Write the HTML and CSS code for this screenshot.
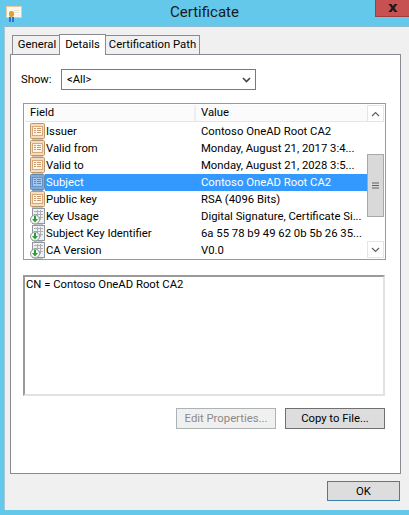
FILE: index.html
```html
<!DOCTYPE html>
<html lang="en">
<head>
    <meta charset="UTF-8">
    <title>Certificate</title>
    <link rel="stylesheet" href="styles.css">
</head>
<body>

    <svg class="defs" width="0" height="0">
        <defs>
            <symbol id="fieldIcon" viewBox="0 0 15 17">
                <rect x="0.5" y="0.5" width="14" height="15" rx="1" fill="#f3dcc0" stroke="#b8966e"/>
                <rect x="2.5" y="3.500" width="10" height="9" fill="#fdf6ea" stroke="#d9a878"/>
                <path d="M4 5.500h2M7 5.500h4M4 7.500h2M7 7.500h4M4 9.500h2M7 9.500h4" stroke="#d09868"/>
                <path d="M2 16.500h11" stroke="#d8c4ac"/>
            </symbol>
            <symbol id="fieldIconSelected" viewBox="0 0 15 17">
                <rect x="0.5" y="0.5" width="14" height="15" rx="1" fill="#84abd6" stroke="#6288ae"/>
                <rect x="2.5" y="3.500" width="10" height="9" fill="#a6c6ec" stroke="#5f94d0"/>
                <path d="M4 5.500h2M7 5.500h4M4 7.500h2M7 7.500h4M4 9.500h2M7 9.500h4" stroke="#4f88cc"/>
                <path d="M2 16.500h11" stroke="#86a4c4"/>
            </symbol>
            <symbol id="extIcon" viewBox="0 0 15 17">
                <rect x="2.500" y="0.5" width="12" height="15" fill="#eef0f2" stroke="#92979e"/>
                <path d="M4 3.500h9M4 6.500h9M4 9.500h9M7.500 2v10M10.500 2v10" stroke="#aab0b8"/>
                <path d="M4 16.500h9" stroke="#c4c8cc"/>
                <circle cx="5" cy="11.500" r="4.500" fill="#f4f8f2" stroke="#86948a"/>
                <path d="M4 8h2v3h2l-3 3.500-3-3.500h2z" fill="#2a9e38"/>
            </symbol>
        </defs>
    </svg>

    <div class="window">
        <div class="titlebar">
            <svg class="appIcon" width="16" height="17" viewBox="0 0 16 17">
                <rect x="0.5" y="0.5" width="15" height="11" fill="#fdf8ee" stroke="#e0cda8"/>
                <path d="M8 4.500h5M8 6.500h5" stroke="#efe4d0"/>
                <rect x="3" y="5" width="5" height="6" rx="2" fill="#e0a030"/>
                <path d="M3 11h2v5H3zM6 11h2v5H6z" fill="#2f72d8"/>
            </svg>
            <span class="titleText">Certificate</span>
            <div class="closeButton">
                <svg width="10" height="8" viewBox="0 0 10 8">
                    <path d="M0.500 0h3L5 2.200 6.500 0h3L6.500 4l3 4h-3L5 5.800 3.500 8h-3l3-4z" fill="#1c1c1c"/>
                </svg>
            </div>
        </div>

        <div class="client">
            <div class="tabs">
                <div class="tab tabGeneral">General</div>
                <div class="tab tabActive">Details</div>
                <div class="tab tabPath">Certification Path</div>
            </div>

            <div class="panel">
                <div class="showRow">
                    <span class="showLabel">Show:</span>
                    <div class="select">
                        <span>&lt;All&gt;</span>
                        <svg width="9" height="6" viewBox="0 0 9 6">
                            <path d="M1 1l3.500 3.500L8 1" fill="none" stroke="#444" stroke-width="1.600"/>
                        </svg>
                    </div>
                </div>

                <div class="list">
                    <div class="listMain">
                        <div class="listHead">
                            <div class="colField headCell">Field</div>
                            <div class="colValue headCell">Value</div>
                        </div>
                        <div class="row">
                            <div class="colField"><svg class="rowIcon"><use href="#fieldIcon"/></svg><span>Issuer</span></div>
                            <div class="colValue">Contoso OneAD Root CA2</div>
                        </div>
                        <div class="row">
                            <div class="colField"><svg class="rowIcon"><use href="#fieldIcon"/></svg><span>Valid from</span></div>
                            <div class="colValue">Monday, August 21, 2017 3:4...</div>
                        </div>
                        <div class="row">
                            <div class="colField"><svg class="rowIcon"><use href="#fieldIcon"/></svg><span>Valid to</span></div>
                            <div class="colValue">Monday, August 21, 2028 3:5...</div>
                        </div>
                        <div class="row rowSelected">
                            <div class="colField"><svg class="rowIcon"><use href="#fieldIconSelected"/></svg><span class="selText">Subject</span></div>
                            <div class="colValue selText">Contoso OneAD Root CA2</div>
                        </div>
                        <div class="row">
                            <div class="colField"><svg class="rowIcon"><use href="#fieldIcon"/></svg><span>Public key</span></div>
                            <div class="colValue">RSA (4096 Bits)</div>
                        </div>
                        <div class="row">
                            <div class="colField"><svg class="rowIcon"><use href="#extIcon"/></svg><span>Key Usage</span></div>
                            <div class="colValue">Digital Signature, Certificate Si...</div>
                        </div>
                        <div class="row">
                            <div class="colField"><svg class="rowIcon"><use href="#extIcon"/></svg><span>Subject Key Identifier</span></div>
                            <div class="colValue">6a 55 78 b9 49 62 0b 5b 26 35...</div>
                        </div>
                        <div class="row">
                            <div class="colField"><svg class="rowIcon"><use href="#extIcon"/></svg><span>CA Version</span></div>
                            <div class="colValue">V0.0</div>
                        </div>
                    </div>
                    <div class="scrollbar">
                        <div class="scrollBtn">
                            <svg width="9" height="6" viewBox="0 0 9 6"><path d="M1 5l3.500-3.500L8 5" fill="none" stroke="#606060" stroke-width="1.200"/></svg>
                        </div>
                        <div class="trackTop"></div>
                        <div class="thumb">
                            <svg width="7" height="7" viewBox="0 0 7 7"><path d="M0 1h7M0 3.500h7M0 6h7" stroke="#606060"/></svg>
                        </div>
                        <div class="track"></div>
                        <div class="scrollBtn">
                            <svg width="9" height="6" viewBox="0 0 9 6"><path d="M1 1l3.500 3.500L8 1" fill="none" stroke="#606060" stroke-width="1.200"/></svg>
                        </div>
                    </div>
                </div>

                <div class="detailBox">CN = Contoso OneAD Root CA2</div>

                <div class="panelButtons">
                    <button class="btn btnDisabled">Edit Properties...</button>
                    <button class="btn">Copy to File...</button>
                </div>
            </div>

            <div class="footer">
                <button class="btn btnOk">OK</button>
            </div>
        </div>
    </div>

</body>
</html>
```

FILE: styles.css
```css
html, body {
    margin: 0;
    padding: 0;
}

body {
    width: 409px;
    height: 515px;
    overflow: hidden;
    background-color: #63c8ea;
    font-family: Roboto, Arial, sans-serif;
    font-size: 11.3px;
    color: #000;
}

.defs {
    position: absolute;
}

.window {
    display: flex;
    flex-direction: column;
    height: 510px;
}

.titlebar {
    display: flex;
    align-items: flex-start;
    height: 26px;
    padding-left: 6px;
    flex: none;
}

.appIcon {
    margin-top: 6px;
    flex: none;
}

.titleText {
    flex: 1;
    text-align: center;
    font-size: 15px;
    line-height: 24px;
    color: #1a1a1a;
    padding-left: 12px;
}

.closeButton {
    box-sizing: border-box;
    display: flex;
    align-items: center;
    justify-content: center;
    width: 34px;
    height: 17px;
    background-color: #c75050;
    border: 1px solid #a03c3c;
    border-top: none;
    border-right: none;
    flex: none;
}

.client {
    flex: 1;
    margin-left: 4px;
    padding: 7px 0 0 5px;
    background-color: #f0f0f0;
    border-top: 1px solid #8fb8cc;
    border-left: 1px solid #a8c8d8;
    box-sizing: border-box;
    display: flex;
    flex-direction: column;
}

.tabs {
    display: flex;
    align-items: flex-end;
    height: 21px;
    margin-bottom: -1px;
    padding-left: 2px;
    position: relative;
    z-index: 1;
    flex: none;
}

.tab {
    box-sizing: border-box;
    height: 19px;
    border: 1px solid #8a8a92;
    border-bottom: none;
    background-color: #f0f0f0;
    text-align: center;
    line-height: 17px;
    margin-bottom: 1px;
    white-space: nowrap;
}

.tabGeneral {
    width: 49px;
    border-right: none;
}

.tabActive {
    width: 47px;
    height: 21px;
    line-height: 19px;
    background-color: #fff;
    margin-bottom: 0;
    margin-left: -2px;
    position: relative;
}

.tabPath {
    width: 94px;
    border-left: none;
}

.panel {
    box-sizing: border-box;
    width: 391px;
    height: 420px;
    background-color: #fff;
    border: 1px solid #8a8a92;
    padding: 14px 15px 0 10px;
    flex: none;
}

.showRow {
    display: flex;
    align-items: center;
}

.showLabel {
    width: 40px;
    flex: none;
}

.select {
    box-sizing: border-box;
    display: flex;
    align-items: center;
    justify-content: space-between;
    width: 195px;
    height: 21px;
    border: 1px solid #7a7a7a;
    padding: 0 4px 0 5px;
}

.list {
    box-sizing: border-box;
    display: flex;
    margin: 13px 0 0 2px;
    width: 363px;
    height: 157px;
    border: 1px solid #9a9a9a;
    padding: 1px;
}

.listMain {
    flex: 1;
    min-width: 0;
}

.listHead {
    display: flex;
    height: 16px;
    border-bottom: 1px solid #e5e5e5;
    background-color: #fbfbfb;
    margin-bottom: 1px;
}

.headCell {
    line-height: 16px;
    padding-left: 5px;
}

.colField {
    box-sizing: border-box;
    display: flex;
    align-items: center;
    width: 171px;
    flex: none;
}

.headCell.colField {
    border-right: 2px solid #efefef;
}

.colValue {
    flex: 1;
    padding-left: 5px;
    white-space: nowrap;
    overflow: hidden;
}

.row {
    display: flex;
    height: 17px;
    line-height: 17px;
}

.rowIcon {
    width: 15px;
    height: 17px;
    margin: 0 1px 0 5px;
    flex: none;
}

.rowSelected {
    background: linear-gradient(to right, #fff 20px, #3399ff 20px);
}

.selText {
    color: #fff;
}

.scrollbar {
    display: flex;
    flex-direction: column;
    width: 17px;
    flex: none;
    background-color: #fff;
}

.scrollBtn {
    box-sizing: border-box;
    display: flex;
    align-items: center;
    justify-content: center;
    height: 17px;
    border: 1px solid #e5e5e5;
    flex: none;
}

.trackTop {
    height: 32px;
    flex: none;
}

.track {
    flex: 1;
}

.thumb {
    box-sizing: border-box;
    display: flex;
    align-items: center;
    justify-content: center;
    height: 63px;
    background-color: #d9d9d9;
    border: 1px solid #a8a8a8;
    flex: none;
}

.detailBox {
    box-sizing: border-box;
    width: 362px;
    height: 121px;
    margin: 15px 0 0 2px;
    border: 2px solid #e2e2e2;
    border-top-color: #9a9a9a;
    border-left-color: #9a9a9a;
    padding: 0 1px;
    line-height: 16px;
}

.panelButtons {
    display: flex;
    gap: 9px;
    margin: 12px 0 0 155px;
}

.btn {
    box-sizing: border-box;
    width: 100px;
    height: 21px;
    padding: 0;
    font-family: inherit;
    font-size: inherit;
    color: #000;
    background-color: #dddddd;
    border: 1px solid #707070;
}

.btnDisabled {
    color: #8a8a8a;
    background-color: #f0f0f0;
    border-color: #adb2b5;
}

.footer {
    display: flex;
    justify-content: flex-end;
    padding: 7px 9px 0 0;
}

.btnOk {
    width: 73px;
    height: 20px;
    border-color: #3c7fb1;
}
```
